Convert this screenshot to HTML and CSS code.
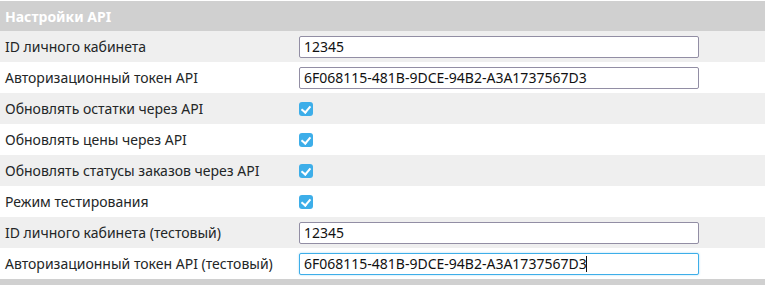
FILE: index.html
```html
<!DOCTYPE html>
<html lang="ru">
<head>
    <meta charset="UTF-8">
    <meta name="viewport" content="width=device-width, initial-scale=1.0">
    <title>Настройки API</title>
    <link rel="stylesheet" href="styles.css">
</head>
<body>
    <table class="settings">
        <tr class="section">
            <th colspan="2">Настройки API</th>
        </tr>
        <tr>
            <td class="label">ID личного кабинета</td>
            <td class="value"><input type="text" class="field" value="12345"></td>
        </tr>
        <tr>
            <td class="label">Авторизационный токен API</td>
            <td class="value"><input type="text" class="field" value="6F068115-481B-9DCE-94B2-A3A1737567D3"></td>
        </tr>
        <tr>
            <td class="label">Обновлять остатки через API</td>
            <td class="value"><span class="check"></span></td>
        </tr>
        <tr>
            <td class="label">Обновлять цены через API</td>
            <td class="value"><span class="check"></span></td>
        </tr>
        <tr>
            <td class="label">Обновлять статусы заказов через API</td>
            <td class="value"><span class="check"></span></td>
        </tr>
        <tr>
            <td class="label">Режим тестирования</td>
            <td class="value"><span class="check"></span></td>
        </tr>
        <tr>
            <td class="label">ID личного кабинета (тестовый)</td>
            <td class="value"><input type="text" class="field" value="12345"></td>
        </tr>
        <tr>
            <td class="label">Авторизационный токен API (тестовый)</td>
            <td class="value">
                <div class="field-wrap">
                    <input type="text" class="field active" id="testToken" value="6F068115-481B-9DCE-94B2-A3A1737567D3">
                    <span class="caret"></span>
                </div>
            </td>
        </tr>
        <tr class="section next">
            <th colspan="2"></th>
        </tr>
    </table>

    <script>
        var token = document.getElementById('testToken');
        token.focus();
        token.setSelectionRange(token.value.length, token.value.length);
    </script>
</body>
</html>
```

FILE: styles.css
```css
body {
    margin: 0;
    padding-top: 1px;
    background: #fff;
    font-family: "Noto Sans", "Open Sans", sans-serif;
    font-size: 14px;
    color: #232627;
}
.settings {
    width: 100%;
    border-collapse: collapse;
}
.section th {
    height: 30px;
    padding: 0 5px;
    background-color: #d0d0d0;
    color: #fff;
    font-weight: bold;
    text-align: left;
}
.section.next th {
    height: 6px;
}
.settings tr:nth-child(even) td {
    background-color: #efefef;
}
.settings td {
    height: 31px;
    padding: 0;
}
.label {
    width: 294px;
    padding-left: 5px !important;
}
.field-wrap {
    position: relative;
    width: 400px;
}
.field {
    display: block;
    width: 400px;
    height: 22px;
    padding: 0 4px;
    border: 1px solid #928ea4;
    border-radius: 2px;
    box-sizing: border-box;
    font-family: inherit;
    font-size: 14px;
    color: #111;
    background: #fff;
    caret-color: transparent;
}
.field:focus,
.field.active {
    outline: none;
    border-color: #3daee9;
    box-shadow: 0 0 2px rgba(61, 174, 233, 0.5);
}
.caret {
    position: absolute;
    left: 287px;
    top: 3px;
    width: 1px;
    height: 16px;
    background: #111;
}
.check {
    display: block;
    width: 14px;
    height: 14px;
    border-radius: 3px;
    background-color: #3daee9;
    position: relative;
}
.check::after {
    content: "";
    position: absolute;
    left: 4px;
    top: 2px;
    width: 4px;
    height: 7px;
    border: solid #fff;
    border-width: 0 2px 2px 0;
    transform: rotate(40deg);
}
```
